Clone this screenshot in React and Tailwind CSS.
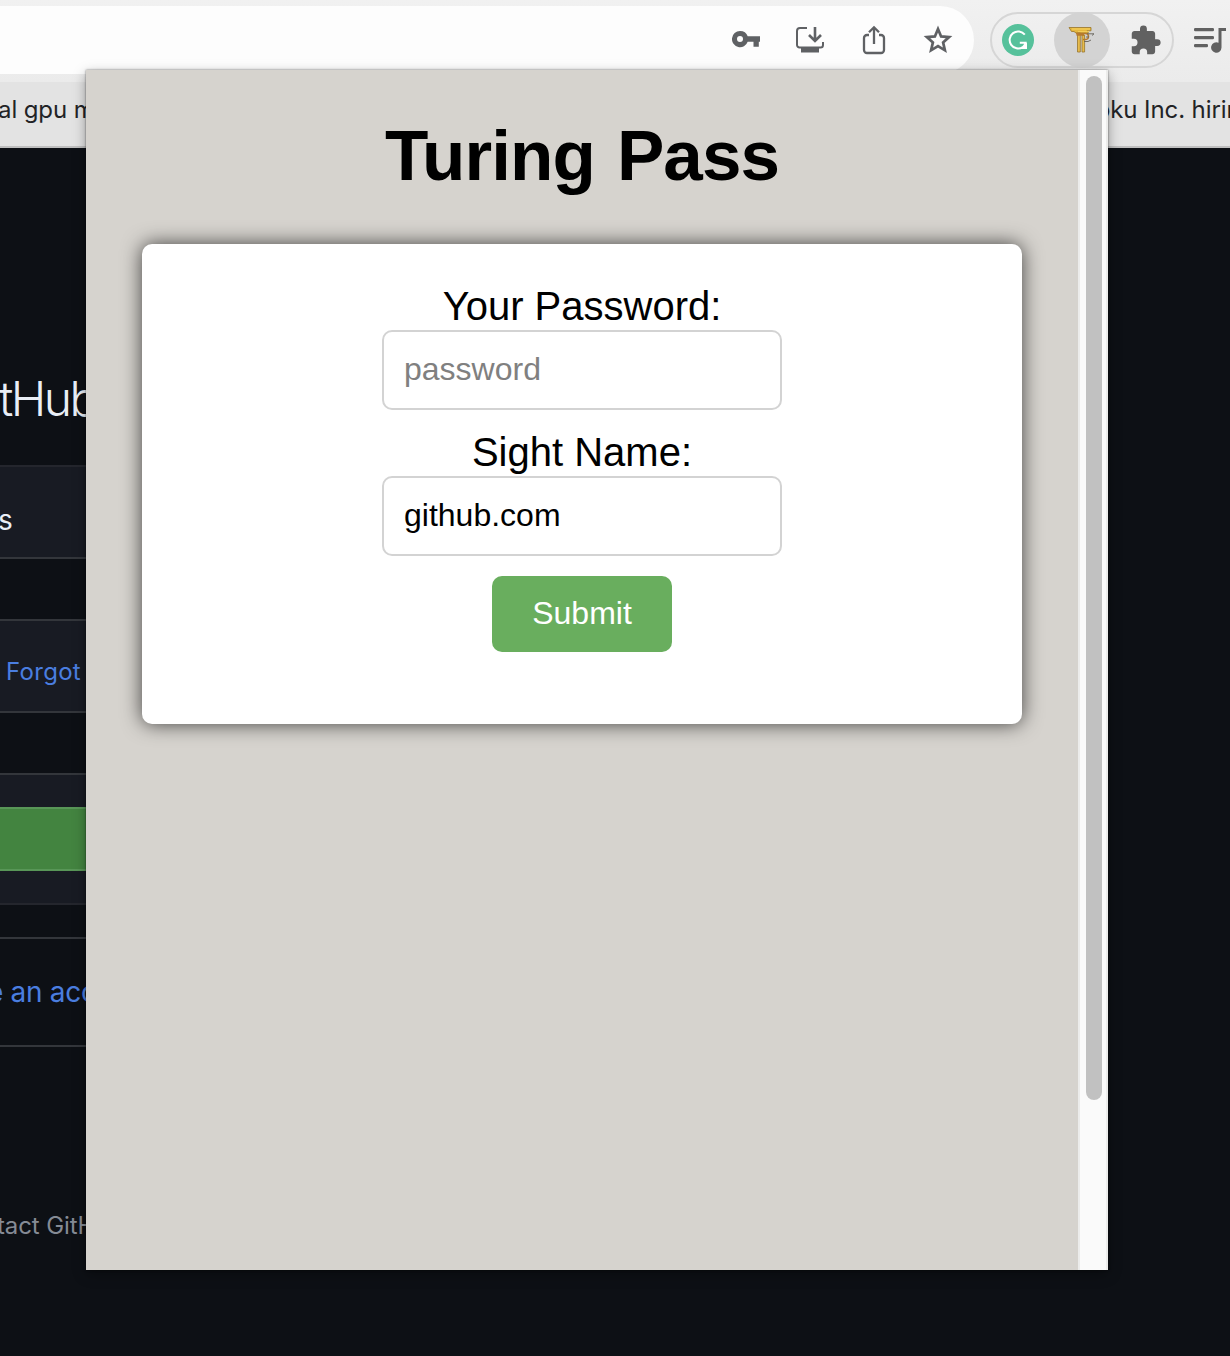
import React from "react";

function KeyIcon() {
  return (
    <svg width="28" height="20" viewBox="0 0 28 20" fill="#5f6164">
      <path
        fillRule="evenodd"
        d="M8 1a8.100 8.100 0 1 0 7.700 10.800H21.500V16.700h5.300V11.800H28V6.300H15.700A8.100 8.100 0 0 0 8 1Zm0 5.100a3 3 0 1 1 0 6 3 3 0 0 1 0-6Z"
      />
    </svg>
  );
}

function InstallIcon() {
  return (
    <svg width="28" height="28" viewBox="0 0 28 28" fill="none" stroke="#5f6164">
      <path d="M11 2H4a3 3 0 0 0-3 3v14a2.500 2.500 0 0 0 2.500 2.500h21A2.500 2.500 0 0 0 27 19v-3" strokeWidth="2" />
      <path d="M19 1v13M13 9l6 6 6-6" strokeWidth="2.600" />
      <path d="M5 22h18v4.500H5z" fill="#5f6164" stroke="none" />
    </svg>
  );
}

function ShareIcon() {
  return (
    <svg width="24" height="30" viewBox="0 0 24 30" fill="none" stroke="#5f6164" strokeWidth="2.300">
      <path d="M7 10H5a3 3 0 0 0-3 3v12a3 3 0 0 0 3 3h14a3 3 0 0 0 3-3V13a3 3 0 0 0-3-3h-2" />
      <path d="M12 19V2.500M7 7.300l5-5 5 5" />
    </svg>
  );
}

function StarIcon() {
  return (
    <svg width="30" height="30" viewBox="0 0 30 30" fill="none" stroke="#5f6164" strokeWidth="2.700">
      <path d="M15 4l3.100 7.400 8 .7-6 5.300 1.800 7.900L15 21.100l-6.900 4.200 1.800-7.900-6-5.300 8-.7z" />
    </svg>
  );
}

function GrammarlyIcon() {
  return (
    <svg width="32" height="32" viewBox="0 0 32 32" fill="none">
      <circle cx="16" cy="16" r="16" fill="#56c19b" />
      <path d="M22.800 10.700a8.500 8.500 0 1 0-2 12.400q2-1.400 2.700-4.300H17.800" stroke="#fff" strokeWidth="2" />
      <path d="M25 18.200V25h-6.800z" fill="#fff" />
    </svg>
  );
}

function TuringIcon() {
  return (
    <svg width="28" height="28" viewBox="0 0 28 28">
      <path d="M1 1.500h22v3.300h-4l1.500 2.200H8L6 5.500H3.500z" fill="#e5b83e" stroke="#987529" strokeWidth=".8" />
      <path d="M4 3h18M10 5.700h11" stroke="#f8d261" strokeWidth="1" />
      <path d="M9.500 7h2.800v19H9.500zM14 9h2.600v17H14z" fill="#e7bc4c" stroke="#98752d" strokeWidth=".8" />
      <path d="M8 7.500h9.500q3 0 3 3T17 13.600h-2M8.500 9H16" fill="none" stroke="#b67a2d" strokeWidth="1.500" />
      <path d="M19 7.800h7l-2 1.700M18 11h3M16 15.500h4l3-1.500" fill="none" stroke="#67635a" strokeWidth=".9" />
    </svg>
  );
}

function PuzzleIcon() {
  return (
    <svg width="33" height="33" viewBox="0 0 24 24" fill="#616161">
      <path d="M20.500 11H19V7c0-1.100-.9-2-2-2h-4V3.500a2.500 2.500 0 0 0-5 0V5H4c-1.100 0-2 .9-2 2v3.800h1.500a2.700 2.700 0 0 1 0 5.400H2V20c0 1.100.9 2 2 2h3.800v-1.500a2.700 2.700 0 0 1 5.400 0V22H17c1.100 0 2-.9 2-2v-4h1.500a2.500 2.500 0 0 0 0-5z" />
    </svg>
  );
}

function PlaylistIcon() {
  return (
    <svg width="32" height="25" viewBox="0 0 32 25" fill="#616161">
      <rect y="0" width="20" height="3.200" rx="1.200" />
      <rect y="8" width="20" height="3.200" rx="1.200" />
      <rect y="16" width="14" height="3.200" rx="1.200" />
      <path d="M24.500 0H32v3h-4.500v16.500a5.200 5.200 0 1 1-3-4.700z" />
    </svg>
  );
}

function Cell({ children }) {
  return <div className="flex w-16 shrink-0 items-center justify-center">{children}</div>;
}

function Toolbar() {
  return (
    <div className="flex h-[82px] bg-linear-to-b from-[#f1f1f1] to-[#ebebeb] pt-[6px]">
      <div className="flex h-[68px] w-[974px] shrink-0 justify-end rounded-r-[34px] bg-[#fdfdfd] pr-1">
        <Cell><KeyIcon /></Cell>
        <Cell><InstallIcon /></Cell>
        <Cell><ShareIcon /></Cell>
        <Cell><StarIcon /></Cell>
      </div>
      <div className="mt-[6px] ml-4 flex h-14 w-[184px] shrink-0 items-center justify-between rounded-full border-2 border-[#d6d6d6]">
        <div className="ml-[10px]"><GrammarlyIcon /></div>
        <div className="flex size-14 shrink-0 items-center justify-center rounded-full bg-[#d3d3d3]"><TuringIcon /></div>
        <div className="mr-[10px]"><PuzzleIcon /></div>
      </div>
      <div className="mt-[22px] ml-5"><PlaylistIcon /></div>
    </div>
  );
}

function Bookmarks() {
  return (
    <div className="flex h-[66px] justify-between border-b-2 border-[#bfbfbf] bg-[#e3e3e3] text-[24px] leading-[56px] tracking-[-0.1px] whitespace-nowrap text-[#222326]">
      <div className="w-[86px] overflow-hidden"><span className="-ml-[2px]">al gpu m</span></div>
      <div className="w-[134px] overflow-hidden">oku Inc. hirin</div>
    </div>
  );
}

function LoginPage() {
  return (
    <div className="h-[1208px] w-[86px] overflow-hidden whitespace-nowrap">
      <div className="h-[317px] pt-[221px] text-[48px] leading-[60px] font-[350] tracking-[-2.5px] text-[#e9eef6]">
        <span className="-ml-[1px]">tHub</span>
      </div>
      <div className="border-y-2 border-[#24262d] bg-[#181b23]">
        <div className="h-[90px] pt-[33px] text-[28px] leading-[40px] text-[#e9eef6]">
          <span className="-ml-[2px]">s</span>
        </div>
        <div className="h-16 border-y-2 border-[#33363b] bg-[#0d1015]" />
        <div className="h-[90px] pt-[31px] pl-[6px] text-[24px] leading-[40px] tracking-[0.3px] text-[#4a7ee0]">Forgot</div>
        <div className="h-16 border-y-2 border-[#33363b] bg-[#0d1015]" />
        <div className="mt-8 mb-8 h-16 border-y-2 border-[#589657] bg-[#438440]" />
      </div>
      <div className="mt-8 h-[110px] border-y-2 border-[#33363b] pt-[33px] text-[28px] leading-[40px] tracking-[-0.3px] text-[#4a7ee0]">
        <span className="-ml-[13px]">e an acc</span>
      </div>
      <div className="pt-[159px] text-[24px] leading-[40px] tracking-[-0.1px] text-[#858b95]">
        <span className="-ml-[3px]">tact GitH</span>
      </div>
    </div>
  );
}

function Popup() {
  return (
    <div className="absolute top-[70px] left-[86px] flex h-[1200px] w-[1022px] bg-[#d6d3ce] font-['Liberation_Sans',Arial,sans-serif] text-black shadow-[0_0_2px_rgba(0,0,0,0.5),0_4px_12px_rgba(0,0,0,0.35)]">
      <div className="flex w-[992px] flex-col items-center">
        <h1 className="mt-[46px] text-[71px] leading-[80px] font-bold tracking-[-0.9px] [word-spacing:3px]">Turing Pass</h1>
        <form className="mt-12 flex h-[480px] w-[880px] flex-col items-center rounded-[10px] bg-white pt-[39px] shadow-[0_0_20px_rgba(0,0,0,0.7)]">
          <label className="text-[40px] leading-[46px]">Your Password:</label>
          <input
            className="mt-px h-20 w-[400px] rounded-[10px] border-2 border-[#d3d3d3] bg-white px-5 pb-0.5 text-[32px] placeholder:text-[#808080]"
            placeholder="password"
          />
          <label className="mt-[19px] text-[40px] leading-[46px]">Sight Name:</label>
          <input
            className="mt-px h-20 w-[400px] rounded-[10px] border-2 border-[#d3d3d3] bg-white px-5 pb-0.5 text-[32px]"
            defaultValue="github.com"
          />
          <button type="button" className="mt-5 h-[76px] w-[180px] rounded-[10px] bg-[#69ae5e] pb-0.5 text-[32px] text-white">
            Submit
          </button>
        </form>
      </div>
      <div className="flex w-[30px] justify-center border-x-2 border-[#ececeb] bg-[#fafafa] pt-[6px] pl-[2px]">
        <div className="h-[1024px] w-4 rounded-full bg-[#c1c1c1]" />
      </div>
    </div>
  );
}

export default function App() {
  return (
    <div className="relative h-[1356px] w-[1230px] overflow-hidden bg-[#0d1015] font-['Inter',sans-serif]">
      <Toolbar />
      <Bookmarks />
      <LoginPage />
      <Popup />
    </div>
  );
}
